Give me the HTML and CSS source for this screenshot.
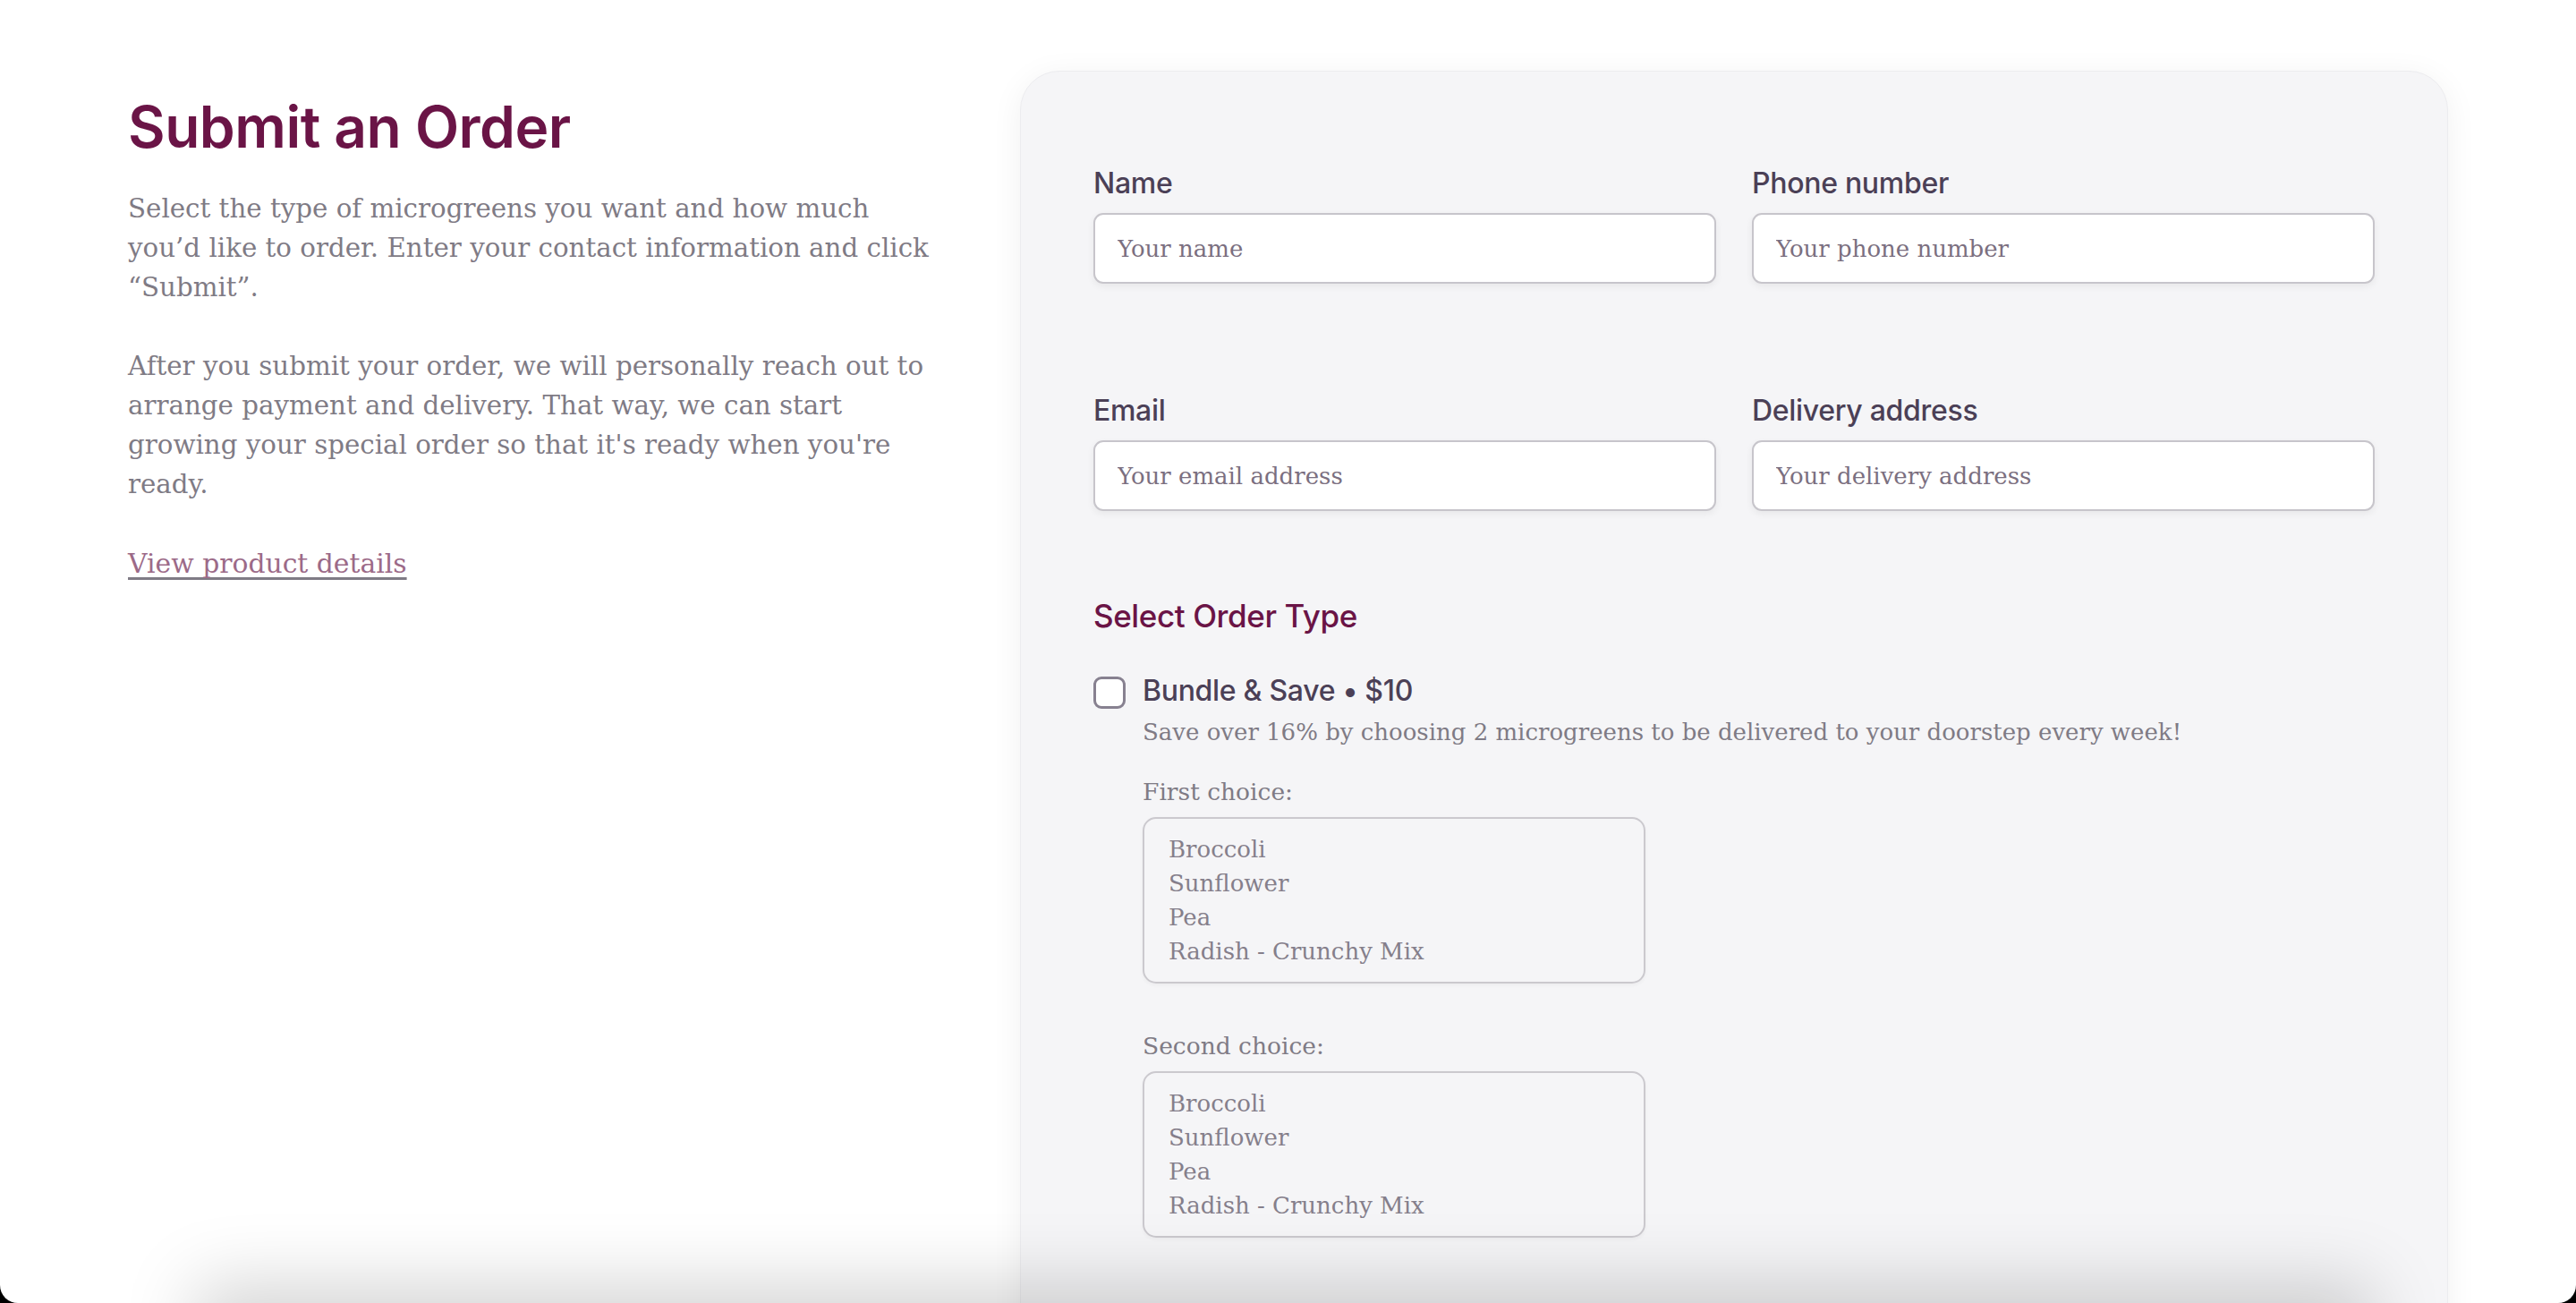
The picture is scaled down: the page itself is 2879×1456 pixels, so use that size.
FILE: index.html
```html
<!DOCTYPE html>
<html lang="en">
<head>
<meta charset="utf-8">
<title>Submit an Order</title>
<link rel="stylesheet" href="styles.css">
</head>
<body>
<main class="page">
  <section class="intro">
    <h1 class="title">Submit an Order</h1>
    <p class="lead">Select the type of microgreens you want and how much you’d like to order. Enter your contact information and click “Submit”.</p>
    <p class="lead">After you submit your order, we will personally reach out to arrange payment and delivery. That way, we can start growing your special order so that it's ready when you're ready.</p>
    <a class="details-link" href="#">View product details</a>
  </section>

  <form class="card">
    <div class="fields">
      <div class="field">
        <label class="field-label" for="name">Name</label>
        <input class="text-input" id="name" type="text" placeholder="Your name">
      </div>
      <div class="field">
        <label class="field-label" for="phone">Phone number</label>
        <input class="text-input" id="phone" type="tel" placeholder="Your phone number">
      </div>
      <div class="field">
        <label class="field-label" for="email">Email</label>
        <input class="text-input" id="email" type="email" placeholder="Your email address">
      </div>
      <div class="field">
        <label class="field-label" for="address">Delivery address</label>
        <input class="text-input" id="address" type="text" placeholder="Your delivery address">
      </div>
    </div>

    <h2 class="section-title">Select Order Type</h2>

    <div class="order-option">
      <input class="check" type="checkbox" id="bundle">
      <div class="option-body">
        <label class="option-title" for="bundle">Bundle &amp; Save • $10</label>
        <p class="option-desc">Save over 16% by choosing 2 microgreens to be delivered to your doorstep every week!</p>

        <label class="choice-label" for="first">First choice:</label>
        <select class="choice-list" id="first" multiple size="4">
          <option>Broccoli</option>
          <option>Sunflower</option>
          <option>Pea</option>
          <option>Radish - Crunchy Mix</option>
        </select>

        <label class="choice-label choice-label-second" for="second">Second choice:</label>
        <select class="choice-list" id="second" multiple size="4">
          <option>Broccoli</option>
          <option>Sunflower</option>
          <option>Pea</option>
          <option>Radish - Crunchy Mix</option>
        </select>
      </div>
    </div>
  </form>
</main>
<div class="bottom-shade"></div>
<div class="window-frame"></div>
</body>
</html>
```

FILE: styles.css
```css
html, body {
  margin: 0;
  padding: 0;
  background: #ffffff;
}

body {
  height: 1456px;
  overflow: hidden;
  font-family: "DejaVu Serif", "Liberation Serif", serif;
}

.page {
  display: flex;
  align-items: flex-start;
  gap: 97px;
  padding: 79px 143px 0 143px;
}

.intro {
  flex: 1 1 auto;
  min-width: 0;
  padding-top: 26px;
}

.title {
  margin: 0;
  font-family: "Inter", "Lato", sans-serif;
  font-weight: 600;
  font-size: 64px;
  line-height: 73px;
  letter-spacing: -0.5px;
  color: #6a1446;
}

.lead {
  margin: 33px 0 0 0;
  font-size: 29.3px;
  line-height: 44px;
  color: #7f7b85;
}

.lead + .lead {
  margin-top: 44px;
}

.details-link {
  display: inline-block;
  margin-top: 45px;
  font-size: 29.8px;
  line-height: 44px;
  color: #9c6a88;
  text-decoration: underline;
  text-decoration-color: #7f7b85;
  text-decoration-thickness: 3px;
  text-decoration-skip-ink: none;
  text-underline-offset: 5px;
}

.card {
  flex: 0 0 1596px;
  box-sizing: border-box;
  height: 1500px;
  padding: 99px 81px 0 81px;
  background: #f5f5f7;
  border: 1px solid #ececef;
  border-radius: 44px;
  box-shadow: 0 6px 36px rgba(0, 0, 0, 0.06);
}

.fields {
  display: grid;
  grid-template-columns: 1fr 1fr;
  column-gap: 40px;
  row-gap: 116px;
}

.field {
  display: flex;
  flex-direction: column;
}

.field-label {
  font-family: "Inter", "Lato", sans-serif;
  font-weight: 500;
  font-size: 32px;
  line-height: 51px;
  letter-spacing: -0.3px;
  color: #4b4056;
  margin-bottom: 8px;
}

.text-input {
  box-sizing: border-box;
  height: 79px;
  width: 100%;
  padding: 0 25px;
  font-family: "DejaVu Serif", "Liberation Serif", serif;
  font-size: 26px;
  color: #4b4056;
  background: #ffffff;
  border: 2px solid #c7c5cb;
  border-radius: 11px;
  box-shadow: 0 3px 8px rgba(0, 0, 0, 0.06);
  outline: none;
}

.text-input::placeholder {
  color: #7b6f80;
  opacity: 1;
}

.section-title {
  margin: 92px 0 0 0;
  font-family: "Inter", "Lato", sans-serif;
  font-weight: 500;
  font-size: 35px;
  line-height: 51px;
  letter-spacing: -0.4px;
  color: #6a1446;
}

.order-option {
  display: flex;
  align-items: flex-start;
  gap: 19px;
  margin-top: 33px;
}

.check {
  appearance: none;
  -webkit-appearance: none;
  flex: 0 0 auto;
  box-sizing: border-box;
  width: 36px;
  height: 36px;
  margin: 9px 0 0 0;
  background: #ffffff;
  border: 3px solid #878190;
  border-radius: 9px;
}

.option-body {
  display: flex;
  flex-direction: column;
  align-items: flex-start;
}

.option-title {
  font-family: "Inter", "Lato", sans-serif;
  font-weight: 500;
  font-size: 32px;
  line-height: 49px;
  letter-spacing: -0.3px;
  color: #4b4056;
}

.option-desc {
  margin: 0;
  font-size: 26px;
  line-height: 44px;
  color: #7f7b85;
}

.choice-label {
  margin-top: 23px;
  font-size: 26.5px;
  line-height: 44px;
  color: #7f7b85;
}

.choice-label-second {
  margin-top: 48px;
}

.choice-list {
  box-sizing: border-box;
  width: 562px;
  height: 186px;
  margin-top: 6px;
  padding: 19px 27px 0 27px;
  overflow: hidden;
  font-family: "DejaVu Serif", "Liberation Serif", serif;
  font-size: 26px;
  color: #857f8b;
  background: transparent;
  border: 2px solid #cbc9ce;
  border-radius: 15px;
  box-shadow: 0 2px 4px rgba(0, 0, 0, 0.04);
  outline: none;
}

.choice-list option {
  padding: 0;
  line-height: 38px;
  min-height: 38px;
  height: 38px;
  color: #857f8b;
  background: transparent;
}

.bottom-shade {
  position: fixed;
  left: 240px;
  right: 250px;
  bottom: -120px;
  height: 120px;
  box-shadow: 0 0 80px 22px rgba(0, 0, 0, 0.17);
  pointer-events: none;
}

.window-frame {
  position: fixed;
  inset: 0;
  border-radius: 0 0 20px 20px;
  box-shadow: 0 0 0 40px #000000;
  pointer-events: none;
}
```
